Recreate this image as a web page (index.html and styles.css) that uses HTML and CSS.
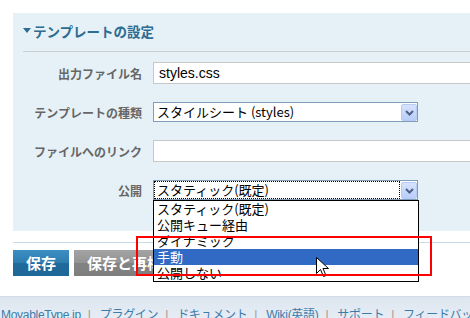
FILE: index.html
```html
<!DOCTYPE html>
<html lang="ja">
<head>
  <meta charset="UTF-8">
  <meta name="viewport" content="width=device-width, initial-scale=1.0">
  <title>テンプレートの設定</title>
  <link rel="stylesheet" href="styles.css">
</head>
<body>
  <div class="panel">
    <h2 class="panel-title">
      <svg class="caret" width="8" height="6" viewBox="0 0 8 6"><path d="M0 0H8L4 5Z" fill="#2d6c91"/></svg>テンプレートの設定
    </h2>
    <div class="fields">
      <div class="row">
        <label class="label">出力ファイル名</label>
        <input class="text-input" type="text" value="styles.css">
      </div>
      <div class="row">
        <label class="label">テンプレートの種類</label>
        <div class="select">
          <span class="select-value">スタイルシート (styles)</span>
          <span class="select-btn">
            <svg width="9" height="6" viewBox="0 0 9 6"><path d="M1 1L4.5 4.5L8 1" fill="none" stroke="#4d6185" stroke-width="2"/></svg>
          </span>
        </div>
      </div>
      <div class="row">
        <label class="label">ファイルへのリンク</label>
        <input class="text-input" type="text" value="">
      </div>
      <div class="row">
        <label class="label">公開</label>
        <div class="select is-open">
          <span class="select-value">スタティック(既定)</span>
          <span class="select-btn">
            <svg width="9" height="6" viewBox="0 0 9 6"><path d="M1 1L4.5 4.5L8 1" fill="none" stroke="#4d6185" stroke-width="2"/></svg>
          </span>
          <ul class="options">
            <li>スタティック(既定)</li>
            <li>公開キュー経由</li>
            <li>ダイナミック</li>
            <li class="selected">手動</li>
            <li>公開しない</li>
          </ul>
          <svg class="cursor" width="13" height="21" viewBox="0 0 13 21">
            <path d="M0.5 0.5V16.5L4.5 12.5L7.5 19.5L10 18.5L7 11.5H12.5Z" fill="#fff" stroke="#000" stroke-width="1"/>
          </svg>
        </div>
      </div>
    </div>
  </div>

  <div class="actions">
    <button class="btn btn-save">保存</button>
    <button class="btn btn-rebuild">保存と再構築</button>
  </div>

  <div class="footer">
    <a href="#">MovableType.jp</a><span class="sep">|</span>
    <a href="#">プラグイン</a><span class="sep">|</span>
    <a href="#">ドキュメント</a><span class="sep">|</span>
    <a href="#">Wiki(英語)</a><span class="sep">|</span>
    <a href="#">サポート</a><span class="sep">|</span>
    <a href="#">フィードバックナ</a>
  </div>

  <div class="mark"></div>
</body>
</html>
```

FILE: styles.css
```css
body {
  margin: 0;
  width: 470px;
  height: 318px;
  overflow: hidden;
  position: relative;
  background: #fff;
  font-family: "Noto Sans CJK JP", "Liberation Sans", sans-serif;
  color: #000;
}
.panel {
  margin: 13px 0 0 13px;
  width: 520px;
  padding: 0 0 31px 10px;
  background: #e6f1f7;
}
.panel-title {
  margin: 0;
  padding: 8px 0 10px;
  line-height: 20px;
  height: 20px;
  font-size: 13.5px;
  font-weight: bold;
  color: #2d6c91;
  border-bottom: 1px solid #c9cfd3;
  display: flex;
  align-items: center;
}
.caret {
  margin-right: 2px;
}
.fields {
  padding-top: 10px;
  display: flex;
  flex-direction: column;
  gap: 18px;
}
.row {
  display: grid;
  grid-template-columns: 119px auto;
  column-gap: 11px;
  align-items: center;
}
.label {
  text-align: right;
  font-size: 12px;
  font-weight: bold;
  color: #666;
}
.text-input {
  box-sizing: border-box;
  width: 360px;
  height: 22px;
  margin: 0;
  padding: 0 5px;
  border: 1px solid #c8c8c8;
  background: #fff;
  font-family: "Liberation Sans", sans-serif;
  font-size: 14px;
  color: #000;
}
.select {
  position: relative;
  box-sizing: border-box;
  width: 265px;
  height: 20px;
  border: 1px solid #7f9db9;
  background: #fff;
  display: flex;
  align-items: stretch;
}
.select-value {
  flex: 1;
  padding-left: 3px;
  font-size: 13px;
  line-height: 18px;
  white-space: nowrap;
  overflow: hidden;
}
.is-open .select-value {
  margin: 0 1px 0 0;
  outline: 1px dotted #000;
  outline-offset: -1px;
}
.select-btn {
  width: 16px;
  margin: 1px 0 0;
  box-sizing: border-box;
  border: 1px solid #b8cbf5;
  border-radius: 2px;
  background: linear-gradient(#d6e3fe, #b9cdfa);
  display: flex;
  align-items: center;
  justify-content: center;
}
.options {
  position: absolute;
  top: 19px;
  left: -1px;
  z-index: 2;
  box-sizing: border-box;
  width: 266px;
  margin: 0;
  padding: 0;
  list-style: none;
  border: 1px solid #000;
  background: #fff;
}
.options li {
  height: 16px;
  line-height: 16px;
  padding-left: 3px;
  font-size: 13px;
  white-space: nowrap;
}
.options li.selected {
  background: #316ac5;
  color: #fff;
}
.cursor {
  position: absolute;
  left: 162px;
  top: 76px;
  z-index: 3;
}
.actions {
  margin: 11px 0 0 13px;
  padding-top: 7px;
  border-top: 1px solid #c8dde9;
  display: flex;
  gap: 5px;
}
.btn {
  height: 26px;
  padding: 0 13px;
  border: none;
  font-family: "Noto Sans CJK JP", sans-serif;
  font-size: 15px;
  font-weight: bold;
  color: #fff;
  line-height: 26px;
}
.btn-save {
  width: 56px;
  padding: 0;
  background: linear-gradient(#3d8fc3 0%, #2c7cb0 50%, #1f6a9b 51%, #1e6898 100%);
}
.btn-rebuild {
  background: linear-gradient(#a3a3a3 0%, #939393 50%, #838383 51%, #7e7e7e 100%);
}
.footer {
  margin-top: 20px;
  height: 30px;
  padding: 11px 0 0 1px;
  background: linear-gradient(#dde6f0, #eef2f8);
  border-top: 1px solid #d2dce7;
  font-family: "Liberation Sans", "Noto Sans CJK JP", sans-serif;
  font-size: 12px;
  line-height: 14px;
  letter-spacing: -0.3px;
  white-space: nowrap;
}
.footer a {
  color: #3c7cab;
  text-decoration: none;
}
.footer .sep {
  color: #999;
  margin: 0 6px 0 7px;
}
.mark {
  position: absolute;
  left: 136px;
  top: 236px;
  width: 292px;
  height: 36px;
  border: 2px solid #f00;
  z-index: 5;
}
```
